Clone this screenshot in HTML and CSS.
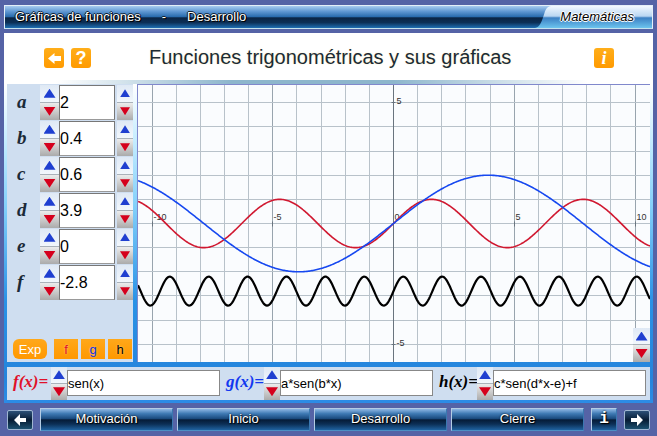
FILE: index.html
```html
<!DOCTYPE html>
<html lang="es">
<head>
<meta charset="utf-8">
<title>Funciones trigonométricas y sus gráficas</title>
<link rel="stylesheet" href="styles.css">
</head>
<body>
<header class="topbar">
  <div class="crumbs"><span>Gráficas de funciones</span><span>-</span><span>Desarrollo</span></div>
  <div class="subject">
    <svg class="subject-edge" viewBox="0 0 22 21" preserveAspectRatio="none" aria-hidden="true">
      <defs>
        <linearGradient id="tab" x1="0" y1="0" x2="0" y2="1">
          <stop offset="0" stop-color="#f2f8ff"/><stop offset=".46" stop-color="#b9d6f2"/>
          <stop offset=".54" stop-color="#3c80c4"/><stop offset="1" stop-color="#6cc4ee"/>
        </linearGradient>
      </defs>
      <path d="M22 0H16C10 1 10 6 8 11S5 20 0 21H22Z" fill="url(#tab)"/>
    </svg>
    <span>Matemáticas</span>
  </div>
</header>

<main class="panel">
  <div class="titlebar">
    <div class="tools">
      <button class="tool" aria-label="Volver"><svg viewBox="0 0 20 20"><path d="M4 10.500L10.500 5V8H17V13H10.500V16Z" fill="#fff"/></svg></button>
      <button class="tool help">?</button>
    </div>
    <h1>Funciones trigonométricas y sus gráficas</h1>
    <button class="tool info">i</button>
  </div>
  <div class="divider"></div>

  <div class="frame">
    <section class="params">
      <div class="rows">
        <div class="row"><label for="pa">a</label><span class="stepper"><button class="up" aria-label="Subir a"></button><button class="down" aria-label="Bajar a"></button></span><input id="pa" value="2"><span class="stepper fine"><button class="up" aria-label="Subir a poco"></button><button class="down" aria-label="Bajar a poco"></button></span></div>
        <div class="row"><label for="pb">b</label><span class="stepper"><button class="up" aria-label="Subir b"></button><button class="down" aria-label="Bajar b"></button></span><input id="pb" value="0.4"><span class="stepper fine"><button class="up" aria-label="Subir b poco"></button><button class="down" aria-label="Bajar b poco"></button></span></div>
        <div class="row"><label for="pc">c</label><span class="stepper"><button class="up" aria-label="Subir c"></button><button class="down" aria-label="Bajar c"></button></span><input id="pc" value="0.6"><span class="stepper fine"><button class="up" aria-label="Subir c poco"></button><button class="down" aria-label="Bajar c poco"></button></span></div>
        <div class="row"><label for="pd">d</label><span class="stepper"><button class="up" aria-label="Subir d"></button><button class="down" aria-label="Bajar d"></button></span><input id="pd" value="3.9"><span class="stepper fine"><button class="up" aria-label="Subir d poco"></button><button class="down" aria-label="Bajar d poco"></button></span></div>
        <div class="row"><label for="pe">e</label><span class="stepper"><button class="up" aria-label="Subir e"></button><button class="down" aria-label="Bajar e"></button></span><input id="pe" value="0"><span class="stepper fine"><button class="up" aria-label="Subir e poco"></button><button class="down" aria-label="Bajar e poco"></button></span></div>
        <div class="row"><label for="pf">f</label><span class="stepper"><button class="up" aria-label="Subir f"></button><button class="down" aria-label="Bajar f"></button></span><input id="pf" value="-2.8"><span class="stepper fine"><button class="up" aria-label="Subir f poco"></button><button class="down" aria-label="Bajar f poco"></button></span></div>
      </div>
      <div class="toggles">
        <button class="exp">Exp</button>
        <button class="fn red">f</button>
        <button class="fn blue">g</button>
        <button class="fn">h</button>
      </div>
    </section>

    <section class="plot">
      <svg id="graph" viewBox="0 0 512 277" preserveAspectRatio="xMidYMid slice" role="img" aria-label="Gráfica"></svg>
      <span class="stepper zoom"><button class="up" aria-label="Acercar"></button><button class="down" aria-label="Alejar"></button></span>
    </section>

    <section class="formulas">
      <div class="formula red"><label for="ff">f(x)=</label><span class="stepper"><button class="up" aria-label="Subir f(x)"></button><button class="down" aria-label="Bajar f(x)"></button></span><input id="ff" value="sen(x)"></div>
      <div class="formula blue"><label for="fg">g(x)=</label><span class="stepper"><button class="up" aria-label="Subir g(x)"></button><button class="down" aria-label="Bajar g(x)"></button></span><input id="fg" value="a*sen(b*x)"></div>
      <div class="formula"><label for="fh">h(x)=</label><span class="stepper"><button class="up" aria-label="Subir h(x)"></button><button class="down" aria-label="Bajar h(x)"></button></span><input id="fh" value="c*sen(d*x-e)+f"></div>
    </section>
  </div>
</main>

<nav class="navbar">
  <a class="arrow" href="#anterior" aria-label="Anterior"><svg viewBox="0 0 22 16"><path d="M5 8L11 2V6H17V10H11V14Z" fill="#fff"/></svg></a>
  <div class="pages">
    <a class="page" href="#motivacion">Motivación</a>
    <a class="page" href="#inicio">Inicio</a>
    <a class="page" href="#desarrollo">Desarrollo</a>
    <a class="page" href="#cierre">Cierre</a>
  </div>
  <a class="page about" href="#info">i</a>
  <a class="arrow" href="#siguiente" aria-label="Siguiente"><svg viewBox="0 0 22 16"><path d="M17 8L11 2V6H5V10H11V14Z" fill="#fff"/></svg></a>
</nav>
<script src="graph.js"></script>
</body>
</html>
```
FILE: styles.css
```css
* { box-sizing: border-box; }

body {
  margin: 0;
  padding: 5px 4px;
  background: #5563a6;
  font-family: "Liberation Sans", Arial, sans-serif;
  font-size: 13px;
  color: #000;
}

button, input { font: inherit; margin: 0; padding: 0; border: 0; border-radius: 0; }
button { cursor: pointer; }
svg { display: block; }

/* top bar */
.topbar {
  display: flex;
  justify-content: space-between;
  height: 24px;
  border: 1px solid #e4eef8;
  border-bottom-color: #c4e2ee;
  background: linear-gradient(#a8cbf0, #5f97d2 25%, #2a6cae 48%, #0a2444 54%, #0c2f56 75%, #1f6fb4);
}
.crumbs {
  display: flex;
  gap: 21px;
  padding-left: 10px;
  line-height: 21px;
  color: #fff;
  text-shadow: 1px 1px 0 #000, -1px 0 0 #123, 0 -1px 0 #123, 1px 0 0 #000;
}
.subject { display: flex; }
.subject-edge { width: 22px; height: 22px; }
.subject span {
  padding: 0 18px 0 3px;
  line-height: 21px;
  font-style: italic;
  background: linear-gradient(#f2f8ff, #b9d6f2 46%, #3c80c4 54%, #6cc4ee);
  text-shadow: 1px 0 0 #fff, -1px 0 0 #fff, 0 1px 0 #fff, 0 -1px 0 #fff, 0 0 2px #fff;
}

/* title */
.panel { margin-top: 4px; background: #fff; }
.titlebar {
  display: flex;
  align-items: center;
  height: 47px;
  padding: 3px 39px 0 40px;
}
.tools { display: flex; gap: 7px; }
.tool {
  width: 20px;
  height: 20px;
  border-radius: 3px;
  background: linear-gradient(#ffae1a, #ff9a00);
  color: #fff;
  font-weight: bold;
  line-height: 20px;
}
.help { font-size: 18px; }
.info { font-family: "Liberation Serif", serif; font-style: italic; font-size: 18px; }
h1 {
  flex: 1;
  margin: 0 0 2px 58px;
  font-size: 20px;
  font-weight: normal;
  color: #1c2b33;
  text-shadow: 0 0 2px #f4ecc8;
}
.divider { height: 4px; background: linear-gradient(90deg, #fff 8%, #8db6cc 35%, #8db6cc 60%, #fff 90%); }

/* workspace */
.frame {
  display: grid;
  grid-template-columns: 126px 1fr;
  column-gap: 4px;
  row-gap: 5px;
  padding: 0 3px 3px;
  background: linear-gradient(#fff, #c4ecff 18%, #84d0fa 38%, #2a92e6 68%, #2484dc 92%, #2c8ce6);
}
.params {
  display: flex;
  flex-direction: column;
  justify-content: space-between;
  padding-bottom: 3px;
  background: #cfdef0;
}
.rows { display: grid; gap: 1px; padding-top: 1px; }
.row { display: grid; grid-template-columns: 33px 19px 56px 18px; height: 35px; }
.row .fine { margin-left: 2px; }
.row label {
  padding-left: 10px;
  font: italic bold 19px/34px "Liberation Serif", serif;
  color: #1b2a38;
}
.row input {
  width: 100%;
  border: 1px solid #777;
  border-bottom-color: #999;
  font-size: 16px;
  background: #fff;
}

.stepper { display: grid; grid-template-rows: 1fr 1fr; }
.stepper button { display: grid; place-items: center; min-width: 0; }
.up { border-bottom: 1px solid #aab2ba; background: linear-gradient(#dfe9f5, #f2f7fc); }
.down { background: linear-gradient(#ececec, #ababab); }
.up::before, .down::before { content: ""; width: 12px; height: 9px; }
.up::before { background: #1f3fd0; clip-path: polygon(50% 0, 100% 100%, 0 100%); }
.down::before { background: #d5001c; clip-path: polygon(0 0, 100% 0, 50% 100%); }
.fine .up::before, .fine .down::before { width: 10px; height: 8px; }

.toggles { display: grid; grid-template-columns: 38px repeat(3, 24px); gap: 3px; padding-left: 6px; }
.toggles button { height: 20px; background: linear-gradient(#ffa81a, #ff9800); text-shadow: 0 0 2px #ffd890; }
.toggles .exp { width: 34px; border-radius: 6px; color: #fff; text-shadow: none; }
.toggles .red { color: #e0102a; }
.toggles .blue { color: #1030e0; }

.plot {
  position: relative;
  height: 278px;
  border: 1px solid #8088cc;
  border-bottom: 0;
  border-right: 0;
  background: #fafcfe;
  overflow: hidden;
}
.plot svg { width: 100%; height: 277px; }
.zoom { position: absolute; right: 0; bottom: 0; width: 17px; height: 34px; }
.grid { stroke: #b8c2ca; }
.grid.strong { stroke: #98a4ae; }
.axis { stroke: #69747e; }
.tick { fill: #333; font-size: 9px; }
.curve { fill: none; stroke-width: 1.600; }
.curve.f { stroke: #d01830; }
.curve.g { stroke: #1648f0; }
.curve.h { stroke: #000; stroke-width: 2.200; }

/* formulas */
.formulas {
  grid-column: 1 / -1;
  display: grid;
  grid-template-columns: repeat(3, 1fr);
  height: 33px;
  padding-right: 4px;
  background: #cfdef0;
}
.formula { display: grid; grid-template-columns: 44px 16px 1fr; }
.formula label { padding-left: 6px; font: italic bold 17px/30px "Liberation Serif", serif; }
.formula input { width: 100%; height: 26px; margin-top: 3px; border: 1px solid #888; background: #fff; }
.formula.red label { color: #e0102a; }
.formula.blue label { color: #1238f0; }

/* navigation */
.navbar { display: flex; align-items: center; gap: 7px; padding: 5px 3px 0; }
.pages { display: grid; grid-template-columns: repeat(4, 1fr); gap: 4px; flex: 1; }
.page, .arrow {
  border: 1px solid #b4cce4;
  border-right-color: #3a78b0;
  border-bottom-color: #4a90c4;
  background: linear-gradient(#8fb8e4, #3f7ab4 22%, #1b4c80 45%, #061c38 52%, #0c2f56 72%, #1f62a0);
  color: #fff;
  text-decoration: none;
  text-align: center;
}
.page { height: 23px; line-height: 20px; text-shadow: 1px 1px 1px #000, 0 0 2px #000; }
.about { width: 26px; font: bold 16px/20px "Liberation Mono", monospace; }
.arrow {
  display: grid;
  place-items: center;
  width: 26px;
  height: 20px;
  border: 1px solid #9fb6d0;
  border-radius: 2px;
  background: linear-gradient(#2c5078, #071c34 50%, #1c5070);
}
.arrow svg { width: 22px; height: 16px; }
```
FILE: graph.js
```js
(function () {
  var NS = "http://www.w3.org/2000/svg";
  var svg = document.getElementById("graph");
  var W = 512, H = 277, cx = 255.5, cy = 138.5, unit = 24.15;

  function add(name, attrs, text) {
    var el = document.createElementNS(NS, name);
    for (var k in attrs) el.setAttribute(k, attrs[k]);
    if (text) el.textContent = text;
    svg.appendChild(el);
  }
  function px(x) { return Math.floor(cx + x * unit) + 0.5; }
  function py(y) { return Math.floor(cy - y * unit) + 0.5; }
  function value(id) { return parseFloat(document.getElementById(id).value) || 0; }

  function curve(cls, fn) {
    var d = "";
    for (var i = 0; i <= W; i++) {
      d += (i ? "L" : "M") + i + " " + (cy - fn((i - cx) / unit) * unit).toFixed(2);
    }
    add("path", { "class": "curve " + cls, d: d });
  }

  function draw() {
    svg.textContent = "";
    var i;
    for (i = -10; i <= 10; i++) {
      add("line", { "class": i % 5 ? "grid" : "grid strong", x1: px(i), x2: px(i), y1: 0, y2: H });
    }
    for (i = -5; i <= 5; i++) {
      add("line", { "class": "grid", x1: 0, x2: W, y1: py(i), y2: py(i) });
    }
    add("line", { "class": "axis", x1: px(0), x2: px(0), y1: 0, y2: H });
    [-10, -5, 0, 5, 10].forEach(function (n) {
      add("line", { "class": "axis", x1: px(n), x2: px(n), y1: py(0) - 2, y2: py(0) + 3 });
      add("text", { "class": "tick", x: px(n) + 1, y: py(0) - 4 }, String(n));
    });
    [-5, 5].forEach(function (n) {
      add("line", { "class": "axis", x1: px(0) - 2, x2: px(0) + 2, y1: py(n), y2: py(n) });
      add("text", { "class": "tick", x: px(0) + 3, y: py(n) + 1 }, String(n));
    });
    var a = value("pa"), b = value("pb"), c = value("pc"), d = value("pd"), e = value("pe"), f = value("pf");
    curve("f", Math.sin);
    curve("g", function (x) { return a * Math.sin(b * x); });
    curve("h", function (x) { return c * Math.sin(d * x - e) + f; });
  }

  document.querySelectorAll(".row").forEach(function (row) {
    var input = row.querySelector("input");
    input.addEventListener("input", draw);
    row.querySelectorAll("button").forEach(function (btn) {
      btn.addEventListener("click", function () {
        var step = btn.classList.contains("up") ? 0.1 : -0.1;
        input.value = +(parseFloat(input.value) + step).toFixed(2);
        draw();
      });
    });
  });
  draw();
})();
```
